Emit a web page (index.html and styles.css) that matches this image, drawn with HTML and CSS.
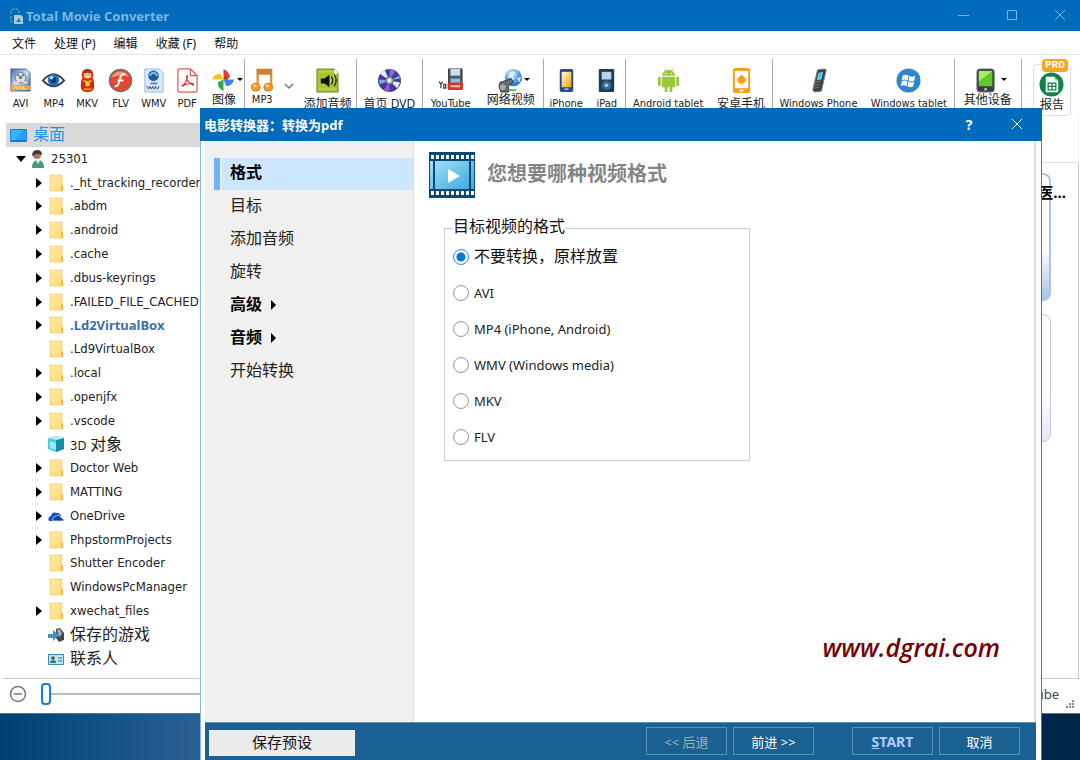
FILE: index.html
```html
<!DOCTYPE html>
<html lang="zh-CN">
<head>
    <meta charset="UTF-8">
    <meta name="viewport" content="width=device-width, initial-scale=1.0">
    <title>Total Movie Converter</title>
    <link rel="stylesheet" href="styles.css">
</head>
<body>
    <!-- Shared icons -->
    <svg class="icon-defs" aria-hidden="true">
        <defs>
            <linearGradient id="folder-fill" x1="0" y1="0" x2="1" y2="1">
                <stop offset="0" stop-color="#ffe9a4"/><stop offset="1" stop-color="#ffda78"/>
            </linearGradient>
            <linearGradient id="paper-blue" x1="0" y1="0" x2="1" y2="1">
                <stop offset="0" stop-color="#4868b4"/><stop offset=".5" stop-color="#c8ddf4"/><stop offset="1" stop-color="#2b58aa"/>
            </linearGradient>
            <radialGradient id="globe-fill" cx=".4" cy=".3" r=".8">
                <stop offset="0" stop-color="#e5f5ff"/><stop offset=".5" stop-color="#5ba6ed"/><stop offset="1" stop-color="#1861c0"/>
            </radialGradient>
            <linearGradient id="note-fill" x1="0" y1="0" x2="0" y2="1">
                <stop offset="0" stop-color="#c98335"/><stop offset="1" stop-color="#f4a13a"/>
            </linearGradient>
            <linearGradient id="gold-fill" x1="0" y1="0" x2="1" y2="1">
                <stop offset="0" stop-color="#fffbd6"/><stop offset="1" stop-color="#f4a300"/>
            </linearGradient>
            <linearGradient id="film-fill" x1="0" y1="0" x2="1" y2="1">
                <stop offset="0" stop-color="#a8e0f8"/><stop offset="1" stop-color="#37aae0"/>
            </linearGradient>
        </defs>
        <symbol id="folder" viewBox="0 0 16 18">
            <path d="M2 1h12v10.500h1V17H2z" fill="url(#folder-fill)" stroke="#edcb6a" stroke-width=".7"/>
            <path d="M13 11.500h2V17h-2z" fill="#efbd45"/>
        </symbol>
    </svg>

    <div class="app">
        <header class="titlebar">
            <svg class="app-logo" viewBox="0 0 16 18"><path d="M3 7V4q4-5 8 0v3M3 9v4q0 2 3 2" fill="none" stroke="#3f8fae" stroke-width="2" stroke-dasharray="3 1"/><path d="M6 8h7l2 2v7H6z" fill="#a9cde0"/><path d="M8 15l3-4 2 4z" fill="#3d7c79"/></svg>
            <h1>Total Movie Converter</h1>
            <div class="window-buttons">
                <button aria-label="Minimize"><svg viewBox="0 0 12 12"><path d="M0 6.500h11"/></svg></button>
                <button aria-label="Maximize"><svg viewBox="0 0 12 12"><path d="M1.500 1.500h9v9h-9z"/></svg></button>
                <button aria-label="Close"><svg viewBox="0 0 12 12"><path d="M1 1l10 10M11 1L1 11"/></svg></button>
            </div>
        </header>

        <nav class="menubar">
            <button>文件</button>
            <button>处理 (P)</button>
            <button>编辑</button>
            <button>收藏 (F)</button>
            <button>帮助</button>
        </nav>

        <!-- Toolbar -->
        <div class="toolbar">
            <div class="group group-formats">
                <button class="tool">
                    <svg viewBox="0 0 26 26"><path d="M3 1h16l4 4v19H3z" fill="url(#paper-blue)" stroke="#243c78" stroke-width=".7"/><circle cx="13" cy="10" r="5.500" fill="#dbe3ea" stroke="#777"/><circle cx="13" cy="10" r="1.500" fill="#555"/><circle cx="10.500" cy="7.500" r="1.300" fill="#778"/><circle cx="15.500" cy="7.500" r="1.300" fill="#778"/><path d="M6 16l7-3 7 3" fill="none" stroke="#ddd" stroke-width="2"/><path d="M3 18h20v5H3z" fill="#f6a32c"/><path d="M6 22l2-3 2 3 2-3 2 3 2-3v3h3" fill="none" stroke="#fff3c4"/></svg>
                    <span>AVI</span>
                </button>
                <button class="tool">
                    <svg viewBox="0 0 26 26"><path d="M2 13q11-13 22 0-11 12-22 0z" fill="#fff" stroke="#354650" stroke-width="2"/><circle cx="13" cy="12.500" r="6" fill="#236fc1"/><circle cx="13" cy="12.500" r="3" fill="#122f57"/><circle cx="11" cy="10" r="2" fill="#9edcff"/></svg>
                    <span>MP4</span>
                </button>
                <button class="tool">
                    <svg viewBox="0 0 26 26"><path d="M13 1q6 0 6 6 0 2-1 3 2 3 2 9 0 6-7 6t-7-6q0-6 2-9-1-1-1-3 0-6 6-6z" fill="#d82618"/><circle cx="13" cy="7" r="4" fill="#ffd58b"/><path d="M9 6q1-4 4-4t4 4q-4-2-8 0z" fill="#8a321a"/><path d="M11 7h1M14 7h1" stroke="#333"/><path d="M9 13q4 3 8 0" stroke="#ffbe25" stroke-width="2" fill="none"/><circle cx="13" cy="17" r="2.500" fill="#f9c72f"/><path d="M9 22h8" stroke="#f8ae27" stroke-width="1.500"/></svg>
                    <span>MKV</span>
                </button>
                <button class="tool">
                    <svg viewBox="0 0 26 26"><circle cx="13" cy="13" r="11.500" fill="#e8482a" stroke="#75716f" stroke-width="1.500"/><path d="M3 10q8-12 19-1-8-3-19 1z" fill="#f59b80"/><path d="M18 6q-5 0-6 7-1 6-5 6M10 13h6" fill="none" stroke="#fff" stroke-width="2"/></svg>
                    <span>FLV</span>
                </button>
                <button class="tool">
                    <svg viewBox="0 0 26 26"><path d="M4 1h15l4 4v20H4z" fill="#d8eaf9" stroke="#94bdde"/><circle cx="13" cy="8" r="5.500" fill="#225b9c"/><path d="M9 8q4-6 8 0" fill="none" stroke="#88b8e3" stroke-width="2"/><path d="M10 15h7v2h-7z" fill="#5689b5"/><path d="M6 19l2 3 1-3 2 3 1-3 2 3 1-3 2 3 2-3" fill="none" stroke="#3d4e63"/></svg>
                    <span>WMV</span>
                </button>
                <button class="tool">
                    <svg viewBox="0 0 26 26"><path d="M5 1h11l7 7v15q0 2-2 2H5q-2 0-2-2V3q0-2 2-2zM16 1v7h7" fill="#fff" stroke="#e25a58" stroke-width="1.300"/><path d="M7 19q5-3 6-10 0-2-1 0 0 5 7 9 1-2-2-2-5 0-10 3z" fill="none" stroke="#e12d2d" stroke-width="1.200"/></svg>
                    <span>PDF</span>
                </button>
                <button class="tool tool-menu">
                    <svg viewBox="0 0 26 26"><path d="M13 12V1q6 3 7 9z" fill="#dc3f34"/><path d="M13 12h11q-1 6-8 7z" fill="#4284df"/><path d="M13 12v12q-6-3-6-9z" fill="#35a452"/><path d="M13 12H1q2-6 9-6z" fill="#f8c51e"/><path d="M13 12h5l-2-3z" fill="#9f251e"/></svg>
                    <span class="cn">图像</span>
                </button>
            </div>
            <div class="group group-audio">
                <button class="tool tool-high">
                    <svg viewBox="0 0 26 26"><path d="M8 20V2h14v17" fill="none" stroke="url(#note-fill)" stroke-width="2.500"/><path d="M8 2h14v5H8z" fill="#ca8238"/><ellipse cx="6" cy="20" rx="4.500" ry="4" fill="#f49b25" stroke="#cc7119"/><ellipse cx="19" cy="20" rx="4.500" ry="4" fill="#f49b25" stroke="#cc7119"/><circle cx="5" cy="18.500" r="1.500" fill="#ffd58d"/><circle cx="18" cy="18.500" r="1.500" fill="#ffd58d"/></svg>
                    <span>MP3</span>
                </button>
                <svg class="chevron" viewBox="0 0 10 8"><path d="M1 2l4 4 4-4" fill="none" stroke="#777" stroke-width="1.500"/></svg>
                <button class="tool">
                    <svg viewBox="0 0 26 26"><path d="M2 1h18l4 5v19H2z" fill="#a7c535" stroke="#6f8525"/><path d="M20 1v5h4z" fill="#fff"/><path d="M4 4h14M4 22h18" stroke="#c3db5e"/><path d="M6 11h4l5-4v13l-5-4H6z" fill="#111"/><path d="M17 9q3 4 0 8M20 7q4 6 0 12" fill="none" stroke="#222" stroke-width="1.300"/></svg>
                    <span class="cn">添加音频</span>
                </button>
            </div>
            <div class="group group-dvd">
                <button class="tool">
                    <svg viewBox="0 0 26 26"><circle cx="13" cy="13" r="11.500" fill="#4436a8" stroke="#444"/><path d="M13 13L3 6l5-4zM13 13l11 2-3 6z" fill="#e4f4ff"/><path d="M13 13L13 1l6 2z" fill="#8e6ae0"/><path d="M13 13L7 23l6 2z" fill="#8e59d2"/><path d="M13 13L2 12l1 5zM13 13l10-5 1 3z" fill="#7fa8e8"/><circle cx="13" cy="13" r="4" fill="#bbb" stroke="#555"/><circle cx="13" cy="13" r="1.500" fill="#fff"/></svg>
                    <span class="cn">首页 DVD</span>
                </button>
            </div>
            <div class="group group-web">
                <button class="tool">
                    <svg viewBox="0 0 26 26"><path d="M11 1h14v18H11z" fill="#4a5865" stroke="#333"/><path d="M13 1h10v7H13z" fill="#cdddeb"/><path d="M13 11h10v6H13z" fill="#8cbbe5"/><rect x="10" y="15" width="16" height="8" rx="2" fill="#d93228"/><path d="M1 14l2 3 2-3M3 17v4M6 17h2v4H6zM10 17" fill="none" stroke="#333" stroke-width="1.200"/><path d="M13 19h10" stroke="#ffc9c4" stroke-width="2"/></svg>
                    <span>YouTube</span>
                </button>
                <button class="tool tool-menu">
                    <svg viewBox="0 0 26 26"><circle cx="16" cy="10" r="9" fill="url(#globe-fill)"/><path d="M12 5q5-3 6 1l-3 2 2 4-3 1-3-5zM20 11l4-2-2 6z" fill="#d8f1ff"/><path d="M2 15l12-4 2 4-5 3v7H3l-2-6z" fill="#656b70" stroke="#30383b"/><circle cx="5" cy="20" r="3" fill="#a4aaae"/><path d="M11 22h8v2h-8z" fill="#5db65d"/></svg>
                    <span class="cn">网络视频</span>
                </button>
            </div>
            <div class="group group-apple">
                <button class="tool">
                    <svg viewBox="0 0 26 26"><rect x="6" y="1" width="14" height="24" rx="2" fill="#274a8b"/><path d="M8 4h10v16H8z" fill="url(#gold-fill)"/><rect x="11" y="21" width="4" height="2" fill="#96b2dc"/></svg>
                    <span>iPhone</span>
                </button>
                <button class="tool">
                    <svg viewBox="0 0 26 26"><rect x="5" y="1" width="16" height="24" rx="1" fill="#183d5b"/><path d="M8 4h10v8H8z" fill="#b9d5e8"/><circle cx="13" cy="18" r="5" fill="#366993"/><circle cx="13" cy="18" r="2" fill="#a5c8df"/></svg>
                    <span>iPad</span>
                </button>
            </div>
            <div class="group group-android">
                <button class="tool">
                    <svg viewBox="0 0 26 26" fill="#9cc83e"><path d="M6 8q1-6 7-6t7 6zM6 9h14v11H6zM9 18h3v7H9zM14 18h3v7h-3z"/><rect x="2" y="9" width="3" height="10" rx="1.500"/><rect x="21" y="9" width="3" height="10" rx="1.500"/><path d="M8 1l3 3M18 1l-3 3" stroke="#9cc83e"/><circle cx="10" cy="6" r=".8" fill="#fff"/><circle cx="16" cy="6" r=".8" fill="#fff"/></svg>
                    <span>Android tablet</span>
                </button>
                <button class="tool">
                    <svg viewBox="0 0 26 26"><rect x="4" y="0" width="18" height="26" rx="3" fill="#f99d17"/><path d="M6 3h14v18H6z" fill="#fff"/><path d="M10 10q3-4 6 0v5h-6zM8.500 11v3M17.500 11v3M12 15v2M14 15v2" fill="#f99d17" stroke="#f99d17"/><path d="M11 23.500h4" stroke="#fff" stroke-width="2"/></svg>
                    <span class="cn">安卓手机</span>
                </button>
            </div>
            <div class="group group-windows">
                <button class="tool">
                    <svg viewBox="0 0 26 26"><path d="M12 2l7-1 2 1-5 22-7 1-2-2z" fill="#3c4144" stroke="#71797d"/><path d="M13 5l5-1-2 8-5 1z" fill="#60c5ee"/><path d="M10 15l6-1M9 18l6-1M8 21l6-1" stroke="#a8adae" stroke-dasharray="1 1"/></svg>
                    <span>Windows Phone</span>
                </button>
                <button class="tool">
                    <svg viewBox="0 0 26 26"><circle cx="13" cy="13" r="12.500" fill="#3286cb"/><path d="M7 8q3-2 6 0l-1 5q-3-2-6 0zM14 8q3 2 6 0l-1 5q-3 2-6 0zM6 14q3-2 6 0l-1 5q-3-2-6 0zM13 14q3 2 6 0l-1 5q-3 2-6 0z" fill="#fff"/></svg>
                    <span>Windows tablet</span>
                </button>
            </div>
            <div class="group group-other">
                <button class="tool tool-menu">
                    <svg viewBox="0 0 26 26"><rect x="2" y="1" width="18" height="24" rx="3" fill="#383d3e" stroke="#777"/><path d="M4 3h14v16H4z" fill="#60c733"/><path d="M4 3h14L4 14z" fill="#a7ed72"/><circle cx="11" cy="22" r="1.500" fill="#bbb"/></svg>
                    <span class="cn">其他设备</span>
                </button>
            </div>
            <div class="group group-report">
                <button class="tool report">
                    <b class="pro">PRO</b>
                    <svg viewBox="0 0 26 26"><circle cx="13" cy="13" r="12.500" fill="#11824a"/><path d="M7 5h9l4 4v12H7z" fill="#fff"/><path d="M16 5v4h4" fill="#a8d2bc"/><path d="M9.500 11.500h8v7h-8zM9.500 15h8M13.500 11.500v7" fill="none" stroke="#11824a" stroke-width="1.300"/></svg>
                    <span class="cn">报告</span>
                </button>
            </div>
        </div>

        <div class="workspace">
            <!-- Folder tree -->
            <aside class="tree">
                <div class="tree-root">
                    <svg viewBox="0 0 18 14"><path d="M0 0h18v14H0z" fill="#0c7bd2"/><path d="M1 1h16v11H1z" fill="#20a5fa"/><path d="M1 1h13L5 12H1z" fill="#38b3ff"/></svg>
                    <span class="zh">桌面</span>
                </div>
                <ul>
                    <li class="user open"><svg viewBox="0 0 16 18"><circle cx="7" cy="5" r="4" fill="#b27b55"/><path d="M2 6q0-6 5-6t5 5q-4-2-6-1t-4 2z" fill="#3c3939"/><path d="M2 18q0-8 6-8t6 8z" fill="#4a9c78"/><path d="M6 10l2 4 2-4z" fill="#fff"/></svg>25301</li>
                    <li class="closed"><svg><use href="#folder"/></svg>._ht_tracking_recorder</li>
                    <li class="closed"><svg><use href="#folder"/></svg>.abdm</li>
                    <li class="closed"><svg><use href="#folder"/></svg>.android</li>
                    <li class="closed"><svg><use href="#folder"/></svg>.cache</li>
                    <li class="closed"><svg><use href="#folder"/></svg>.dbus-keyrings</li>
                    <li class="closed"><svg><use href="#folder"/></svg>.FAILED_FILE_CACHED</li>
                    <li class="closed current"><svg><use href="#folder"/></svg>.Ld2VirtualBox</li>
                    <li><svg><use href="#folder"/></svg>.Ld9VirtualBox</li>
                    <li class="closed"><svg><use href="#folder"/></svg>.local</li>
                    <li class="closed"><svg><use href="#folder"/></svg>.openjfx</li>
                    <li class="closed"><svg><use href="#folder"/></svg>.vscode</li>
                    <li><svg viewBox="0 0 16 18"><path d="M0 3l9-2 7 2v11l-8 3-8-3z" fill="#4ec8dc"/><path d="M8 5l8-2v11l-8 3z" fill="#118eac"/><path d="M0 3l9-2 7 2-8 2z" fill="#b3f0f3"/><path d="M2 6l6 2v7l-6-2z" fill="#9ee9ef"/></svg><span>3D <span class="zh-inline">对象</span></span></li>
                    <li class="closed"><svg><use href="#folder"/></svg>Doctor Web</li>
                    <li class="closed"><svg><use href="#folder"/></svg>MATTING</li>
                    <li class="closed"><svg viewBox="0 0 16 18"><path d="M1 14q-2-4 2-5 1-5 6-3 4 0 4 4 3 1 2 4z" fill="#1453ba"/><path d="M5 14q-1-4 3-5 4-2 5 2 3 0 3 3z" fill="#0641a5" stroke="#fff" stroke-width=".7"/></svg>OneDrive</li>
                    <li class="closed"><svg><use href="#folder"/></svg>PhpstormProjects</li>
                    <li><svg><use href="#folder"/></svg>Shutter Encoder</li>
                    <li><svg><use href="#folder"/></svg>WindowsPcManager</li>
                    <li class="closed"><svg><use href="#folder"/></svg>xwechat_files</li>
                    <li><svg viewBox="0 0 16 18"><path d="M8 3l4-1 4 5v7l-5 2-3-4z" fill="#414b52"/><path d="M9 4l3-1 2 5-3 3z" fill="#a3afb8"/><path d="M0 8h5V4l6 5-6 6v-3H0z" fill="#4c91bd"/></svg><span class="zh">保存的游戏</span></li>
                    <li><svg viewBox="0 0 16 18"><path d="M.5 4.500h15v10H.5z" fill="#bfe3f5" stroke="#388bb6"/><circle cx="5" cy="8" r="1.700" fill="#5d493d"/><path d="M2 13q0-3 3-3t3 3z" fill="#328457"/><path d="M10 8h4M10 11h4" stroke="#257dab"/></svg><span class="zh">联系人</span></li>
                </ul>
            </aside>

            <main class="files">
                <div class="files-head"></div>
                <div class="file-list">
                    <div class="card selected"><span class="card-name">医...</span></div>
                    <div class="card"></div>
                </div>
            </main>
        </div>

        <footer class="statusbar">
            <button class="zoom-out" aria-label="Zoom out"><svg viewBox="0 0 18 18"><circle cx="9" cy="9" r="7.500"/><path d="M5 9h8"/></svg></button>
            <input class="zoom" type="range" min="0" max="100" value="0" aria-label="Thumbnail size">
            <a href="#">YouTube</a>
            <svg class="grip" viewBox="0 0 9 9"><path d="M6 0h2v2H6zM3 3h2v2H3zM6 3h2v2H6zM0 6h2v2H0zM3 6h2v2H3zM6 6h2v2H6z" fill="#888"/></svg>
        </footer>
    </div>

    <!-- Conversion dialog -->
    <section class="dialog" role="dialog" aria-labelledby="dialog-title">
        <header class="dialog-title">
            <h2 id="dialog-title">电影转换器：转换为pdf</h2>
            <button aria-label="Help">?</button>
            <button aria-label="Close"><svg viewBox="0 0 12 12"><path d="M1 1l10 10M11 1L1 11"/></svg></button>
        </header>
        <div class="dialog-frame">
            <div class="dialog-body">
                <nav class="steps">
                    <button class="active">格式</button>
                    <button>目标</button>
                    <button>添加音频</button>
                    <button>旋转</button>
                    <button class="more">高级</button>
                    <button class="more">音频</button>
                    <button>开始转换</button>
                </nav>
                <div class="page">
                    <div class="page-head">
                        <svg viewBox="0 0 46 46">
                            <path d="M0 0h46v46H0z" fill="#0b4778"/>
                            <path d="M1 9h44v28H1z" fill="url(#film-fill)"/>
                            <path d="M5 9v28M41 9v28" stroke="#0b4778" stroke-width="2"/>
                            <path d="M2 5h44M2 41h44" stroke="#fff" stroke-width="4" stroke-dasharray="3 2"/>
                            <path d="M19 17l12 7-12 7z" fill="#fff"/>
                        </svg>
                        <h3>您想要哪种视频格式</h3>
                    </div>
                    <fieldset>
                        <legend>目标视频的格式</legend>
                        <label><input type="radio" name="format" checked><span class="zh">不要转换，原样放置</span></label>
                        <label><input type="radio" name="format">AVI</label>
                        <label><input type="radio" name="format">MP4 (iPhone, Android)</label>
                        <label><input type="radio" name="format">WMV (Windows media)</label>
                        <label><input type="radio" name="format">MKV</label>
                        <label><input type="radio" name="format">FLV</label>
                    </fieldset>
                    <p class="site">www.dgrai.com</p>
                </div>
            </div>
            <footer class="dialog-footer">
                <button class="save">保存预设</button>
                <button class="back" disabled>&lt;&lt; 后退</button>
                <button>前进 &gt;&gt;</button>
                <button class="start"><u>S</u>TART</button>
                <button>取消</button>
            </footer>
        </div>
    </section>
</body>
</html>
```

FILE: styles.css
```css
*,
*::before,
*::after {
    box-sizing: border-box;
}

body {
    margin: 0;
    height: 100vh;
    position: relative;
    overflow: hidden;
    font-family: "Noto Sans", "Noto Sans CJK SC", sans-serif;
    font-size: 13px;
    color: #222;
    background: linear-gradient(90deg, #00416f, #2b6196 19%, #00294c 80%, #00264a);
}

button {
    font: inherit;
    color: inherit;
    background: none;
    border: none;
    padding: 0;
}

.icon-defs {
    position: absolute;
    width: 0;
    height: 0;
}

.app {
    height: calc(100vh - 46px);
    display: flex;
    flex-direction: column;
    background: #fff;
    border-bottom: 1px solid #2a83c8;
}

/* Title bar and menu */
.titlebar {
    flex: none;
    height: 31px;
    display: flex;
    align-items: center;
    padding-left: 8px;
    background: #006bbb;
    color: #7eb6df;
}

.titlebar h1 {
    flex: 1;
    margin: 0 0 0 2px;
    font-family: "Noto Sans", sans-serif;
    font-size: 13px;
}

.app-logo {
    width: 16px;
    height: 18px;
}

.window-buttons {
    display: flex;
    margin-right: -4px;
}

.window-buttons button {
    width: 48px;
}

.window-buttons svg,
.dialog-title svg {
    width: 12px;
    height: 12px;
    fill: none;
    stroke: currentColor;
}

.menubar {
    flex: none;
    height: 24px;
    display: flex;
    gap: 18px;
    padding-left: 12px;
    border-bottom: 1px solid #e6e6e6;
    font-size: 12px;
    color: #111;
}

/* Toolbar */
.toolbar {
    flex: none;
    height: 63px;
    display: flex;
    padding: 4px 8px 0 4px;
    font-family: "DejaVu Sans Condensed", "Noto Sans", "Noto Sans CJK SC", sans-serif;
    font-size: 11px;
}

.cn {
    font-family: "Noto Sans", "Noto Sans CJK SC", sans-serif;
    font-size: 12px;
}

.group {
    display: flex;
    align-items: flex-start;
    justify-content: space-around;
    padding-top: 5px;
    border-right: 1px solid #aaa;
    min-width: 0;
}

.group-formats { flex: 242 0 0; }
.group-audio { flex: 112 0 0; }
.group-dvd { flex: 65 0 0; }
.group-web { flex: 121 0 0; }
.group-apple { flex: 82 0 0; }
.group-android { flex: 147 0 0; }
.group-windows { flex: 182 0 0; }
.group-other { flex: 67 0 0; }
.group-report {
    flex: 0 0 50px;
    border: none;
    padding: 0 0 0 10px;
}

.tool {
    position: relative;
    display: flex;
    flex-direction: column;
    align-items: center;
    gap: 3px;
    line-height: 16px;
    white-space: nowrap;
}

.tool svg {
    width: 25px;
    height: 25px;
    margin-top: 4px;
}

.tool-menu,
.tool-high {
    gap: 1px;
    line-height: 12px;
}

.group-formats .tool {
    width: 33px;
}

.group-formats .tool-menu {
    width: 40px;
}

.tool-menu::after {
    content: "";
    position: absolute;
    left: calc(50% + 13px);
    top: 14px;
    border: 3px solid transparent;
    border-top-color: #000;
    border-bottom: none;
}

.chevron {
    width: 10px;
    height: 8px;
    margin-top: 18px;
}

.report {
    width: 38px;
    height: 52px;
    margin-top: 5px;
    padding-top: 3px;
    border: 1px solid #ddd;
    border-radius: 4px;
    gap: 0;
}

.pro {
    position: absolute;
    top: -6px;
    left: 8px;
    padding: 0 3px;
    border-radius: 4px;
    background: #ffa31a;
    color: #fff;
    font: bold 11px/13px "Liberation Mono", monospace;
}

/* Folder tree and file area */
.workspace {
    flex: 1;
    min-height: 0;
    display: flex;
    border-bottom: 1px solid #ccc;
    margin-left: 3px;
}

.tree {
    width: 240px;
    display: flex;
    flex-direction: column;
    padding: 5px 0 7px 3px;
    font-family: "DejaVu Sans Condensed", "Noto Sans", "Noto Sans CJK SC", sans-serif;
}

.tree-root {
    height: 24px;
    display: flex;
    align-items: center;
    gap: 6px;
    padding-left: 4px;
    background: #d9d9d9;
    color: #1c94ec;
}

.tree-root svg {
    width: 17px;
    height: 13px;
}

.tree ul {
    flex: 1;
    display: flex;
    flex-direction: column;
    margin: 0;
    padding: 0;
    list-style: none;
}

.tree li {
    flex: 1;
    display: flex;
    align-items: center;
    gap: 6px;
    padding-left: 30px;
    line-height: 20px;
    white-space: nowrap;
}

.tree li::before {
    content: "";
    width: 6px;
    border: 5px solid transparent;
    border-right: none;
}

.tree li.closed::before {
    border-left: 6px solid #000;
}

.tree li svg {
    flex: none;
    width: 16px;
    height: 18px;
}

.tree li.user {
    gap: 4px;
    padding-left: 10px;
}

.tree li.user svg {
    margin-right: 1px;
}

.tree li.open::before {
    width: 10px;
    border: 5px solid transparent;
    border-top: 6px solid #000;
    border-bottom: none;
}

.tree li.current {
    color: #3f6ea8;
    font-weight: bold;
    font-family: "Noto Sans", sans-serif;
}

.zh,
.zh-inline {
    font-family: "Noto Sans CJK SC", sans-serif;
    font-size: 16px;
}

.zh {
    line-height: 20px;
    padding-bottom: 4px;
}

.files {
    flex: 1;
    display: flex;
    flex-direction: column;
}

.files-head {
    height: 45px;
    border-right: 1px solid #eee;
    border-bottom: 1px solid #ddd;
    margin-right: 1px;
}

.file-list {
    flex: 1;
    padding: 10px 27px 0 0;
    margin-right: 1px;
    border-right: 1px solid #ccc;
}

.card {
    position: relative;
    height: 128px;
    margin-bottom: 13px;
    border: 1px solid #c8c8d4;
    border-radius: 8px;
    background: linear-gradient(#fff 60%, #e6e4fa);
}

.card.selected {
    border: 2px solid #a9c4e6;
    background: linear-gradient(#fff 60%, #a9c2e2);
}

.card-name {
    position: absolute;
    top: 6px;
    right: -17px;
    font-size: 15px;
    font-weight: bold;
    color: #000;
}

/* Status bar */
.statusbar {
    flex: none;
    height: 34px;
    display: flex;
    align-items: center;
    padding: 0 5px 4px 9px;
}

.statusbar a {
    margin-left: auto;
    color: #444;
    text-decoration: none;
}

.zoom-out {
    width: 18px;
    height: 18px;
}

.zoom-out svg {
    display: block;
    fill: none;
    stroke: #777;
    stroke-width: 1.5;
}

.zoom {
    appearance: none;
    width: 240px;
    height: 22px;
    margin: 0 0 0 14px;
    background: linear-gradient(#bbb, #bbb) center / 100% 2px no-repeat;
}

.zoom::-webkit-slider-thumb {
    appearance: none;
    width: 10px;
    height: 22px;
    border: 2px solid #0f7fdb;
    border-radius: 4px;
    background: #fff;
}

.grip {
    width: 9px;
    height: 9px;
    margin-left: 7px;
    align-self: flex-end;
}

/* Dialog window */
.dialog {
    position: absolute;
    top: 108px;
    left: 200px;
    right: 38px;
    bottom: 0;
    display: flex;
    flex-direction: column;
    background: #fff;
    border-left: 1px solid #7fb6e8;
    border-right: 1px solid #2a7fc4;
}

.dialog-title {
    flex: none;
    height: 33px;
    margin: 0 -1px;
    display: flex;
    align-items: center;
    padding: 0 1px 0 4px;
    background: #006bbb;
    color: #fff;
}

.dialog-title h2 {
    flex: 1;
    margin: 0;
    font-size: 13px;
}

.dialog-title button {
    width: 48px;
    font-weight: bold;
    font-size: 14px;
}

.dialog-frame {
    flex: 1;
    display: flex;
    flex-direction: column;
    margin: 0 5px 0 4px;
}

.dialog-body {
    flex: 1;
    display: flex;
    border-right: 2px solid #ddd;
}

.steps {
    width: 209px;
    padding-top: 17px;
    background: #f0f0f0;
    border-right: 1px solid #ddd;
    display: flex;
    flex-direction: column;
    gap: 1px;
}

.steps button {
    height: 32px;
    margin-left: 9px;
    padding: 0 0 4px 16px;
    text-align: left;
    font-size: 16px;
    line-height: 20px;
    color: #222;
}

.steps .active,
.steps .more {
    font-weight: bold;
    color: #000;
}

.steps .active {
    padding-left: 10px;
    border-left: 6px solid #6db5fb;
    background: linear-gradient(#cce6ff, #cce6ff) 2px 0 no-repeat #f0f0f0;
}

.steps .more::after {
    content: "";
    display: inline-block;
    margin-left: 9px;
    border: 5px solid transparent;
    border-left-color: #000;
    border-right: none;
}

.page {
    flex: 1;
    display: flex;
    flex-direction: column;
    padding: 11px 30px 60px 15px;
}

.page-head {
    display: flex;
    align-items: center;
    gap: 12px;
}

.page-head svg {
    width: 46px;
    height: 46px;
}

.page-head h3 {
    margin: 0;
    padding-bottom: 5px;
    font-size: 20px;
    color: #858585;
}

fieldset {
    width: 306px;
    margin: 19px 0 0 15px;
    padding: 0 8px 5px;
    border: 1px solid #ccc;
}

legend {
    padding: 0 0 4px;
    line-height: 18px;
    font-size: 16px;
    color: #111;
}

fieldset label {
    height: 36px;
    display: flex;
    align-items: center;
    gap: 5px;
}

fieldset .zh {
    color: #111;
}

fieldset input {
    appearance: none;
    width: 16px;
    height: 16px;
    margin: 0;
    border: 1px solid #999;
    border-radius: 50%;
    background: #fff;
}

fieldset input:checked {
    border-color: #2a8fe6;
    background: radial-gradient(circle, #0078d7 0 4px, #fff 5px);
}

.site {
    margin: auto 4px 0 0;
    align-self: flex-end;
    font: italic 600 25px/30px "Open Sans", sans-serif;
    color: #780000;
}

.dialog-footer {
    flex: none;
    height: 38px;
    display: flex;
    gap: 6px;
    padding: 4px 16px 5px 4px;
    background: #1b6092;
    border-top: 1px solid #5e8fb3;
}

.dialog-footer button {
    width: 81px;
    height: 28px;
    border: 1px solid #5a91ba;
    color: #fff;
}

.dialog-footer .save {
    width: 146px;
    height: 26px;
    margin: 3px auto 0 0;
    padding-bottom: 3px;
    border-color: #eee;
    background: #ebebeb;
    color: #111;
    font-size: 15px;
    line-height: 20px;
}

.dialog-footer .back {
    color: #a3b3b5;
}

.dialog-footer .start {
    margin-left: 32px;
    color: #a9d0ff;
    font-weight: bold;
    font-size: 14px;
}
```
